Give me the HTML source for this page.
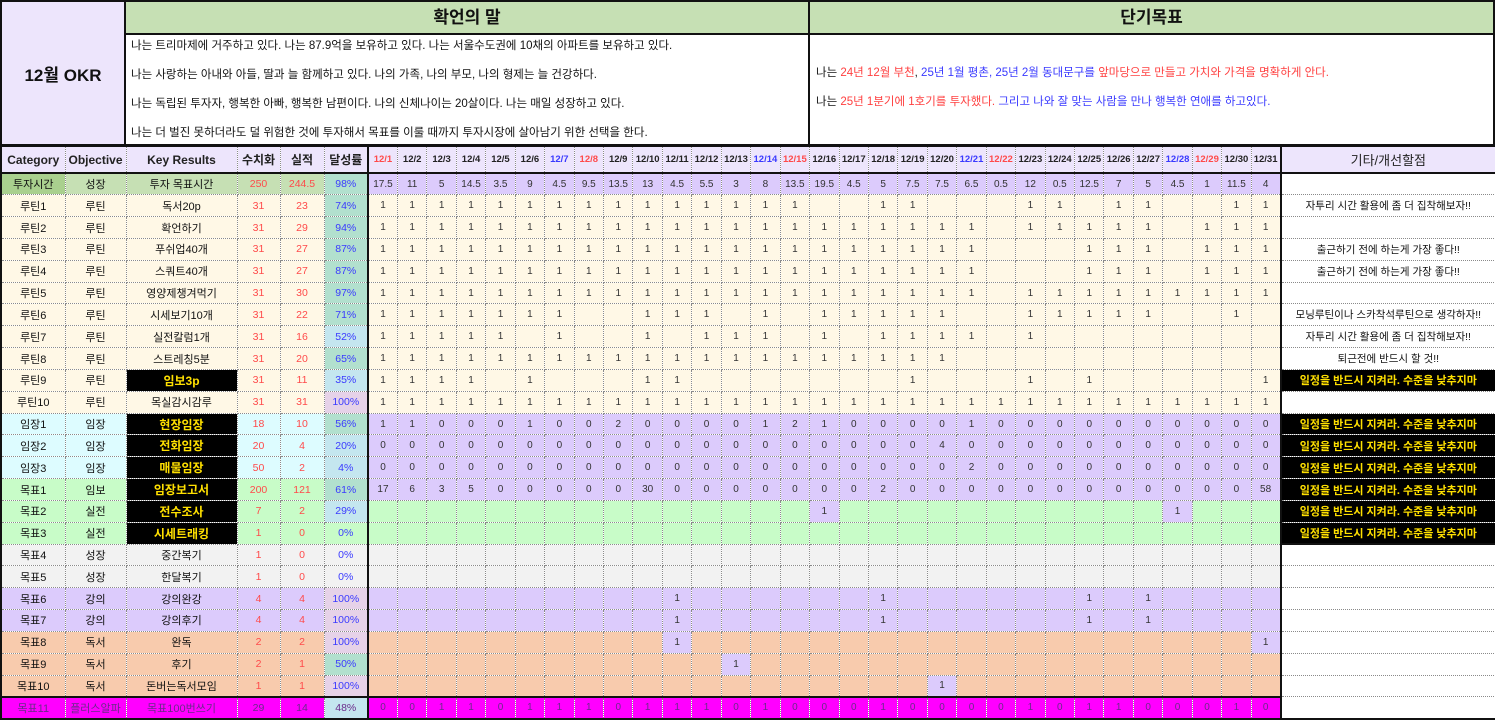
<!DOCTYPE html>
<html><head><meta charset="utf-8"><style>
*{box-sizing:border-box;margin:0;padding:0}
body{width:1495px;height:722px;background:#fff;font-family:"Liberation Sans","Noto Sans CJK KR",sans-serif;position:relative;overflow:hidden;color:#111}
.abs{position:absolute}
.okr{left:0;top:0;width:126px;height:146px;background:#ede5fc;border:2px solid #111;display:flex;align-items:center;justify-content:center;font-weight:bold;font-size:17px}
.t1{left:124px;top:0;width:686px;height:35px;background:#c6e0b4;border:2px solid #111;text-align:center;font-weight:bold;font-size:17px;line-height:31px}
.t2{left:808px;top:0;width:687px;height:35px;background:#c6e0b4;border:2px solid #111;text-align:center;font-weight:bold;font-size:17px;line-height:31px}
.b1{left:124px;top:33px;width:686px;height:113px;border:2px solid #111;border-top:none;font-size:11.5px;padding:5px 0 0 5px}
.b1 div{height:29px;line-height:16px}
.b2{left:808px;top:33px;width:687px;height:113px;border:2px solid #111;border-top:none;font-size:11.5px;padding:32px 0 0 6px}
.b2 div{height:29px;line-height:16px}
.r{color:#ff4040}.bl{color:#3a3aff}
table{position:absolute;left:0;top:145px;border-collapse:collapse;table-layout:fixed;width:1495px}
td{border:1px dotted #8a8a8a;text-align:center;font-size:10px;padding:0;white-space:nowrap;overflow:hidden;height:21.84px;color:#333}
tr.h td{height:27px;background:#ede5fc;font-weight:bold;font-size:9.5px;color:#222;border-top:2px solid #111;border-bottom:2px solid #111}
tr.h td.L{font-size:12px}
td.c1,td.c2,td.c3{font-size:11px;color:#111}
td.v{color:#ff4a4a;font-size:10.5px}
td.a{color:#3a3aff;font-size:10.5px;border-right:2px solid #111}
td.n{border-left:2px solid #111;font-size:10.5px;color:#111;background:#fff}
td.c1{border-left:2px solid #111}
td.k{background:#000!important;color:#ffe000!important;font-weight:bold;font-size:12px!important}
td.nk{background:#000!important;color:#ffe000!important;font-weight:bold;font-size:11px}
.g0 td{background:#c6e0b4}.g0 td.c1{background:#a9d08e}
.g0 td.d{background:#dccbfc}
.rt td{background:#fff8e6}
.im td{background:#ddfcff}.im td.d{background:#dccbfc}
.gr td{background:#c8fcc8}.gr td.d.p{background:#dccbfc}
.m1 td.d{background:#dccbfc}
.gy td{background:#f2f2f2}
.pu td{background:#dccbfc}
.pe td{background:#f8cbad}.pe td.p{background:#dccbfc}
.mg td{background:#ff00ff;color:#6a2a8a}.mg td.c1,.mg td.c2,.mg td.c3,.mg td.v{color:#6a2a8a}
.mg td{border-top:2px solid #111;border-bottom:2px solid #111}
tr td.a.t{background:#b2e0ce}tr td.a.lb{background:#c4e6ef}tr td.a.pk{background:#e6d2e8}
tr td.n{background:#fff}
.hr{color:#ff4a4a!important}.hb{color:#3a3aff!important}
</style></head><body>
<div class="abs okr">12월 OKR</div>
<div class="abs t1">확언의 말</div>
<div class="abs t2">단기목표</div>
<div class="abs b1">
<div>나는 트리마제에 거주하고 있다. 나는 87.9억을 보유하고 있다. 나는 서울수도권에 10채의 아파트를 보유하고 있다.</div>
<div>나는 사랑하는 아내와 아들, 딸과 늘 함께하고 있다. 나의 가족, 나의 부모, 나의 형제는 늘 건강하다.</div>
<div>나는 독립된 투자자, 행복한 아빠, 행복한 남편이다. 나의 신체나이는 20살이다. 나는 매일 성장하고 있다.</div>
<div>나는 더 벌진 못하더라도 덜 위험한 것에 투자해서 목표를 이룰 때까지 투자시장에 살아남기 위한 선택을 한다.</div>
</div>
<div class="abs b2">
<div>나는 <span class="r">24년 12월 부천</span>, <span class="bl">25년 1월 평촌, 25년 2월 동대문구를</span> <span class="r">앞마당으로 만들고 가치와 가격을 명확하게 안다.</span></div>
<div>나는 <span class="r">25년 1분기에 1호기를 투자했다.</span> <span class="bl">그리고 나와 잘 맞는 사람을 만나 행복한 연애를 하고있다.</span></div>
</div>
<table>
<colgroup><col style="width:64px"><col style="width:61px"><col style="width:111px"><col style="width:43px"><col style="width:44px"><col style="width:44px">
<col span="31" style="width:29.45px"><col style="width:215px"></colgroup>
<tr class="h"><td class="L c1">Category</td><td class="L">Objective</td><td class="L">Key Results</td><td class="L">수치화</td><td class="L">실적</td><td class="L a">달성률</td><td class="hr">12/1</td><td>12/2</td><td>12/3</td><td>12/4</td><td>12/5</td><td>12/6</td><td class="hb">12/7</td><td class="hr">12/8</td><td>12/9</td><td>12/10</td><td>12/11</td><td>12/12</td><td>12/13</td><td class="hb">12/14</td><td class="hr">12/15</td><td>12/16</td><td>12/17</td><td>12/18</td><td>12/19</td><td>12/20</td><td class="hb">12/21</td><td class="hr">12/22</td><td>12/23</td><td>12/24</td><td>12/25</td><td>12/26</td><td>12/27</td><td class="hb">12/28</td><td class="hr">12/29</td><td>12/30</td><td>12/31</td><td class="n L" style="background:#ede5fc;font-weight:normal;font-size:13px">기타/개선할점</td></tr>
<tr class="g0"><td class="c1">투자시간</td><td class="c2">성장</td><td class="c3">투자 목표시간</td><td class="v">250</td><td class="v">244.5</td><td class="a t">98%</td><td class="d">17.5</td><td class="d">11</td><td class="d">5</td><td class="d">14.5</td><td class="d">3.5</td><td class="d">9</td><td class="d">4.5</td><td class="d">9.5</td><td class="d">13.5</td><td class="d">13</td><td class="d">4.5</td><td class="d">5.5</td><td class="d">3</td><td class="d">8</td><td class="d">13.5</td><td class="d">19.5</td><td class="d">4.5</td><td class="d">5</td><td class="d">7.5</td><td class="d">7.5</td><td class="d">6.5</td><td class="d">0.5</td><td class="d">12</td><td class="d">0.5</td><td class="d">12.5</td><td class="d">7</td><td class="d">5</td><td class="d">4.5</td><td class="d">1</td><td class="d">11.5</td><td class="d">4</td><td class="n"></td></tr>
<tr class="rt"><td class="c1">루틴1</td><td class="c2">루틴</td><td class="c3">독서20p</td><td class="v">31</td><td class="v">23</td><td class="a t">74%</td><td>1</td><td>1</td><td>1</td><td>1</td><td>1</td><td>1</td><td>1</td><td>1</td><td>1</td><td>1</td><td>1</td><td>1</td><td>1</td><td>1</td><td>1</td><td></td><td></td><td>1</td><td>1</td><td></td><td></td><td></td><td>1</td><td>1</td><td></td><td>1</td><td>1</td><td></td><td></td><td>1</td><td>1</td><td class="n">자투리 시간 활용에 좀 더 집착해보자!!</td></tr>
<tr class="rt"><td class="c1">루틴2</td><td class="c2">루틴</td><td class="c3">확언하기</td><td class="v">31</td><td class="v">29</td><td class="a t">94%</td><td>1</td><td>1</td><td>1</td><td>1</td><td>1</td><td>1</td><td>1</td><td>1</td><td>1</td><td>1</td><td>1</td><td>1</td><td>1</td><td>1</td><td>1</td><td>1</td><td>1</td><td>1</td><td>1</td><td>1</td><td>1</td><td></td><td>1</td><td>1</td><td>1</td><td>1</td><td>1</td><td></td><td>1</td><td>1</td><td>1</td><td class="n"></td></tr>
<tr class="rt"><td class="c1">루틴3</td><td class="c2">루틴</td><td class="c3">푸쉬업40개</td><td class="v">31</td><td class="v">27</td><td class="a t">87%</td><td>1</td><td>1</td><td>1</td><td>1</td><td>1</td><td>1</td><td>1</td><td>1</td><td>1</td><td>1</td><td>1</td><td>1</td><td>1</td><td>1</td><td>1</td><td>1</td><td>1</td><td>1</td><td>1</td><td>1</td><td>1</td><td></td><td></td><td></td><td>1</td><td>1</td><td>1</td><td></td><td>1</td><td>1</td><td>1</td><td class="n">출근하기 전에 하는게 가장 좋다!!</td></tr>
<tr class="rt"><td class="c1">루틴4</td><td class="c2">루틴</td><td class="c3">스쿼트40개</td><td class="v">31</td><td class="v">27</td><td class="a t">87%</td><td>1</td><td>1</td><td>1</td><td>1</td><td>1</td><td>1</td><td>1</td><td>1</td><td>1</td><td>1</td><td>1</td><td>1</td><td>1</td><td>1</td><td>1</td><td>1</td><td>1</td><td>1</td><td>1</td><td>1</td><td>1</td><td></td><td></td><td></td><td>1</td><td>1</td><td>1</td><td></td><td>1</td><td>1</td><td>1</td><td class="n">출근하기 전에 하는게 가장 좋다!!</td></tr>
<tr class="rt"><td class="c1">루틴5</td><td class="c2">루틴</td><td class="c3">영양제챙겨먹기</td><td class="v">31</td><td class="v">30</td><td class="a t">97%</td><td>1</td><td>1</td><td>1</td><td>1</td><td>1</td><td>1</td><td>1</td><td>1</td><td>1</td><td>1</td><td>1</td><td>1</td><td>1</td><td>1</td><td>1</td><td>1</td><td>1</td><td>1</td><td>1</td><td>1</td><td>1</td><td></td><td>1</td><td>1</td><td>1</td><td>1</td><td>1</td><td>1</td><td>1</td><td>1</td><td>1</td><td class="n"></td></tr>
<tr class="rt"><td class="c1">루틴6</td><td class="c2">루틴</td><td class="c3">시세보기10개</td><td class="v">31</td><td class="v">22</td><td class="a t">71%</td><td>1</td><td>1</td><td>1</td><td>1</td><td>1</td><td>1</td><td>1</td><td></td><td></td><td>1</td><td>1</td><td>1</td><td></td><td>1</td><td></td><td>1</td><td>1</td><td>1</td><td>1</td><td>1</td><td></td><td></td><td>1</td><td>1</td><td>1</td><td>1</td><td>1</td><td></td><td></td><td>1</td><td></td><td class="n">모닝루틴이나 스카착석루틴으로 생각하자!!</td></tr>
<tr class="rt"><td class="c1">루틴7</td><td class="c2">루틴</td><td class="c3">실전칼럼1개</td><td class="v">31</td><td class="v">16</td><td class="a lb">52%</td><td>1</td><td>1</td><td>1</td><td>1</td><td>1</td><td></td><td>1</td><td></td><td></td><td>1</td><td></td><td>1</td><td>1</td><td>1</td><td></td><td>1</td><td></td><td>1</td><td>1</td><td>1</td><td>1</td><td></td><td>1</td><td></td><td></td><td></td><td></td><td></td><td></td><td></td><td></td><td class="n">자투리 시간 활용에 좀 더 집착해보자!!</td></tr>
<tr class="rt"><td class="c1">루틴8</td><td class="c2">루틴</td><td class="c3">스트레칭5분</td><td class="v">31</td><td class="v">20</td><td class="a t">65%</td><td>1</td><td>1</td><td>1</td><td>1</td><td>1</td><td>1</td><td>1</td><td>1</td><td>1</td><td>1</td><td>1</td><td>1</td><td>1</td><td>1</td><td>1</td><td>1</td><td>1</td><td>1</td><td>1</td><td>1</td><td></td><td></td><td></td><td></td><td></td><td></td><td></td><td></td><td></td><td></td><td></td><td class="n">퇴근전에 반드시 할 것!!</td></tr>
<tr class="rt"><td class="c1">루틴9</td><td class="c2">루틴</td><td class="c3 k">임보3p</td><td class="v">31</td><td class="v">11</td><td class="a lb">35%</td><td>1</td><td>1</td><td>1</td><td>1</td><td></td><td>1</td><td></td><td></td><td></td><td>1</td><td>1</td><td></td><td></td><td></td><td></td><td></td><td></td><td></td><td>1</td><td></td><td></td><td></td><td>1</td><td></td><td>1</td><td></td><td></td><td></td><td></td><td></td><td>1</td><td class="n nk">일정을 반드시 지켜라. 수준을 낮추지마</td></tr>
<tr class="rt"><td class="c1">루틴10</td><td class="c2">루틴</td><td class="c3">목실감시감루</td><td class="v">31</td><td class="v">31</td><td class="a pk">100%</td><td>1</td><td>1</td><td>1</td><td>1</td><td>1</td><td>1</td><td>1</td><td>1</td><td>1</td><td>1</td><td>1</td><td>1</td><td>1</td><td>1</td><td>1</td><td>1</td><td>1</td><td>1</td><td>1</td><td>1</td><td>1</td><td>1</td><td>1</td><td>1</td><td>1</td><td>1</td><td>1</td><td>1</td><td>1</td><td>1</td><td>1</td><td class="n"></td></tr>
<tr class="im"><td class="c1">임장1</td><td class="c2">임장</td><td class="c3 k">현장임장</td><td class="v">18</td><td class="v">10</td><td class="a t">56%</td><td class="d">1</td><td class="d">1</td><td class="d">0</td><td class="d">0</td><td class="d">0</td><td class="d">1</td><td class="d">0</td><td class="d">0</td><td class="d">2</td><td class="d">0</td><td class="d">0</td><td class="d">0</td><td class="d">0</td><td class="d">1</td><td class="d">2</td><td class="d">1</td><td class="d">0</td><td class="d">0</td><td class="d">0</td><td class="d">0</td><td class="d">1</td><td class="d">0</td><td class="d">0</td><td class="d">0</td><td class="d">0</td><td class="d">0</td><td class="d">0</td><td class="d">0</td><td class="d">0</td><td class="d">0</td><td class="d">0</td><td class="n nk">일정을 반드시 지켜라. 수준을 낮추지마</td></tr>
<tr class="im"><td class="c1">임장2</td><td class="c2">임장</td><td class="c3 k">전화임장</td><td class="v">20</td><td class="v">4</td><td class="a lb">20%</td><td class="d">0</td><td class="d">0</td><td class="d">0</td><td class="d">0</td><td class="d">0</td><td class="d">0</td><td class="d">0</td><td class="d">0</td><td class="d">0</td><td class="d">0</td><td class="d">0</td><td class="d">0</td><td class="d">0</td><td class="d">0</td><td class="d">0</td><td class="d">0</td><td class="d">0</td><td class="d">0</td><td class="d">0</td><td class="d">4</td><td class="d">0</td><td class="d">0</td><td class="d">0</td><td class="d">0</td><td class="d">0</td><td class="d">0</td><td class="d">0</td><td class="d">0</td><td class="d">0</td><td class="d">0</td><td class="d">0</td><td class="n nk">일정을 반드시 지켜라. 수준을 낮추지마</td></tr>
<tr class="im"><td class="c1">임장3</td><td class="c2">임장</td><td class="c3 k">매물임장</td><td class="v">50</td><td class="v">2</td><td class="a lb">4%</td><td class="d">0</td><td class="d">0</td><td class="d">0</td><td class="d">0</td><td class="d">0</td><td class="d">0</td><td class="d">0</td><td class="d">0</td><td class="d">0</td><td class="d">0</td><td class="d">0</td><td class="d">0</td><td class="d">0</td><td class="d">0</td><td class="d">0</td><td class="d">0</td><td class="d">0</td><td class="d">0</td><td class="d">0</td><td class="d">0</td><td class="d">2</td><td class="d">0</td><td class="d">0</td><td class="d">0</td><td class="d">0</td><td class="d">0</td><td class="d">0</td><td class="d">0</td><td class="d">0</td><td class="d">0</td><td class="d">0</td><td class="n nk">일정을 반드시 지켜라. 수준을 낮추지마</td></tr>
<tr class="gr m1"><td class="c1">목표1</td><td class="c2">임보</td><td class="c3 k">임장보고서</td><td class="v">200</td><td class="v">121</td><td class="a t">61%</td><td class="d">17</td><td class="d">6</td><td class="d">3</td><td class="d">5</td><td class="d">0</td><td class="d">0</td><td class="d">0</td><td class="d">0</td><td class="d">0</td><td class="d">30</td><td class="d">0</td><td class="d">0</td><td class="d">0</td><td class="d">0</td><td class="d">0</td><td class="d">0</td><td class="d">0</td><td class="d">2</td><td class="d">0</td><td class="d">0</td><td class="d">0</td><td class="d">0</td><td class="d">0</td><td class="d">0</td><td class="d">0</td><td class="d">0</td><td class="d">0</td><td class="d">0</td><td class="d">0</td><td class="d">0</td><td class="d">58</td><td class="n nk">일정을 반드시 지켜라. 수준을 낮추지마</td></tr>
<tr class="gr"><td class="c1">목표2</td><td class="c2">실전</td><td class="c3 k">전수조사</td><td class="v">7</td><td class="v">2</td><td class="a lb">29%</td><td></td><td></td><td></td><td></td><td></td><td></td><td></td><td></td><td></td><td></td><td></td><td></td><td></td><td></td><td></td><td class="d p">1</td><td></td><td></td><td></td><td></td><td></td><td></td><td></td><td></td><td></td><td></td><td></td><td class="d p">1</td><td></td><td></td><td></td><td class="n nk">일정을 반드시 지켜라. 수준을 낮추지마</td></tr>
<tr class="gr"><td class="c1">목표3</td><td class="c2">실전</td><td class="c3 k">시세트래킹</td><td class="v">1</td><td class="v">0</td><td class="a">0%</td><td></td><td></td><td></td><td></td><td></td><td></td><td></td><td></td><td></td><td></td><td></td><td></td><td></td><td></td><td></td><td></td><td></td><td></td><td></td><td></td><td></td><td></td><td></td><td></td><td></td><td></td><td></td><td></td><td></td><td></td><td></td><td class="n nk">일정을 반드시 지켜라. 수준을 낮추지마</td></tr>
<tr class="gy"><td class="c1">목표4</td><td class="c2">성장</td><td class="c3">중간복기</td><td class="v">1</td><td class="v">0</td><td class="a">0%</td><td></td><td></td><td></td><td></td><td></td><td></td><td></td><td></td><td></td><td></td><td></td><td></td><td></td><td></td><td></td><td></td><td></td><td></td><td></td><td></td><td></td><td></td><td></td><td></td><td></td><td></td><td></td><td></td><td></td><td></td><td></td><td class="n" style="border-top:2px solid #111"></td></tr>
<tr class="gy"><td class="c1">목표5</td><td class="c2">성장</td><td class="c3">한달복기</td><td class="v">1</td><td class="v">0</td><td class="a">0%</td><td></td><td></td><td></td><td></td><td></td><td></td><td></td><td></td><td></td><td></td><td></td><td></td><td></td><td></td><td></td><td></td><td></td><td></td><td></td><td></td><td></td><td></td><td></td><td></td><td></td><td></td><td></td><td></td><td></td><td></td><td></td><td class="n"></td></tr>
<tr class="pu"><td class="c1">목표6</td><td class="c2">강의</td><td class="c3">강의완강</td><td class="v">4</td><td class="v">4</td><td class="a pk">100%</td><td></td><td></td><td></td><td></td><td></td><td></td><td></td><td></td><td></td><td></td><td>1</td><td></td><td></td><td></td><td></td><td></td><td></td><td>1</td><td></td><td></td><td></td><td></td><td></td><td></td><td>1</td><td></td><td>1</td><td></td><td></td><td></td><td></td><td class="n"></td></tr>
<tr class="pu"><td class="c1">목표7</td><td class="c2">강의</td><td class="c3">강의후기</td><td class="v">4</td><td class="v">4</td><td class="a pk">100%</td><td></td><td></td><td></td><td></td><td></td><td></td><td></td><td></td><td></td><td></td><td>1</td><td></td><td></td><td></td><td></td><td></td><td></td><td>1</td><td></td><td></td><td></td><td></td><td></td><td></td><td>1</td><td></td><td>1</td><td></td><td></td><td></td><td></td><td class="n"></td></tr>
<tr class="pe"><td class="c1">목표8</td><td class="c2">독서</td><td class="c3">완독</td><td class="v">2</td><td class="v">2</td><td class="a pk">100%</td><td></td><td></td><td></td><td></td><td></td><td></td><td></td><td></td><td></td><td></td><td class="p">1</td><td></td><td></td><td></td><td></td><td></td><td></td><td></td><td></td><td></td><td></td><td></td><td></td><td></td><td></td><td></td><td></td><td></td><td></td><td></td><td class="p">1</td><td class="n"></td></tr>
<tr class="pe"><td class="c1">목표9</td><td class="c2">독서</td><td class="c3">후기</td><td class="v">2</td><td class="v">1</td><td class="a t">50%</td><td></td><td></td><td></td><td></td><td></td><td></td><td></td><td></td><td></td><td></td><td></td><td></td><td class="p">1</td><td></td><td></td><td></td><td></td><td></td><td></td><td></td><td></td><td></td><td></td><td></td><td></td><td></td><td></td><td></td><td></td><td></td><td></td><td class="n"></td></tr>
<tr class="pe"><td class="c1">목표10</td><td class="c2">독서</td><td class="c3">돈버는독서모임</td><td class="v">1</td><td class="v">1</td><td class="a pk">100%</td><td></td><td></td><td></td><td></td><td></td><td></td><td></td><td></td><td></td><td></td><td></td><td></td><td></td><td></td><td></td><td></td><td></td><td></td><td></td><td class="p">1</td><td></td><td></td><td></td><td></td><td></td><td></td><td></td><td></td><td></td><td></td><td></td><td class="n"></td></tr>
<tr class="mg"><td class="c1">목표11</td><td class="c2">플러스알파</td><td class="c3">목표100번쓰기</td><td class="v">29</td><td class="v">14</td><td class="a lb">48%</td><td>0</td><td>0</td><td>1</td><td>1</td><td>0</td><td>1</td><td>1</td><td>1</td><td>0</td><td>1</td><td>1</td><td>1</td><td>0</td><td>1</td><td>0</td><td>0</td><td>0</td><td>1</td><td>0</td><td>0</td><td>0</td><td>0</td><td>1</td><td>0</td><td>1</td><td>1</td><td>0</td><td>0</td><td>0</td><td>1</td><td>0</td><td class="n" style="border-top:1px dotted #8a8a8a"></td></tr>
</table>
</body></html>
